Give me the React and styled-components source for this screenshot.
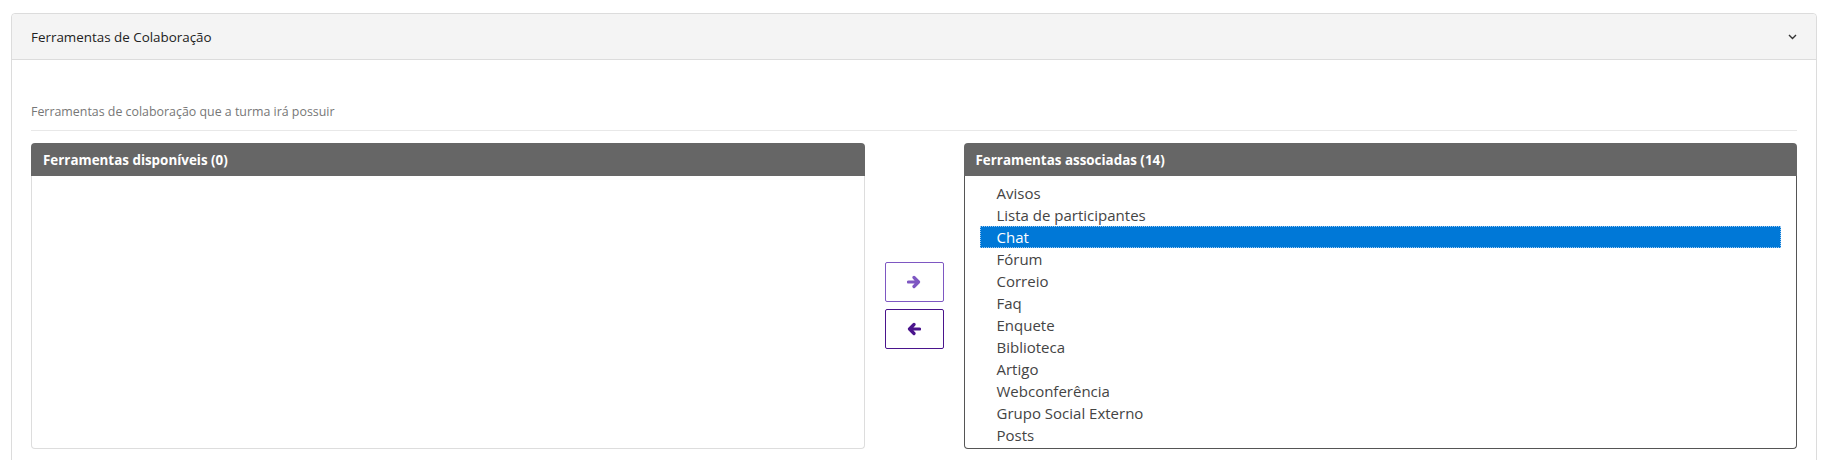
import styled, { createGlobalStyle } from "styled-components";

const GlobalStyle = createGlobalStyle`
  body {
    margin: 0;
    background: #fff;
    font-family: "Open Sans", "Noto Sans", sans-serif;
    color: #333;
  }
`;

const Page = styled.div`
  padding: 13px 7px 0 11px;
`;

const Card = styled.div`
  border: 1px solid #dcdcdc;
  border-radius: 4px;
  background: #fff;
`;

const CardHeader = styled.div`
  display: flex;
  align-items: center;
  justify-content: space-between;
  height: 45px;
  padding: 0 19px 0 19px;
  background: #f4f4f4;
  border-bottom: 1px solid #dcdcdc;
  border-radius: 4px 4px 0 0;
  font-size: 13.4px;
  color: #222;
`;

const CardBody = styled.div`
  padding: 43px 19px 24px 19px;
`;

const Hint = styled.div`
  font-size: 12.4px;
  color: #777;
  padding-bottom: 10px;
  border-bottom: 1px solid #e8e8e8;
  margin-bottom: 12px;
`;

const Columns = styled.div`
  display: grid;
  grid-template-columns: 1fr 99px 1fr;
`;

const Panel = styled.div`
  display: flex;
  flex-direction: column;
  height: 306px;
`;

const PanelTitle = styled.div`
  height: 33px;
  display: flex;
  align-items: center;
  padding: 0 12px;
  background: #666;
  color: #fff;
  font-weight: 700;
  font-size: 13.4px;
  border-radius: 4px 4px 0 0;
`;

const PanelList = styled.div`
  flex: 1;
  border: 1px solid ${(p) => (p.$focused ? "#555" : "#ddd")};
  border-top: none;
  border-radius: 0 0 4px 4px;
  padding: 6px 15px 0 15px;
`;

const Option = styled.div`
  height: 22px;
  line-height: 22px;
  padding-left: 17px;
  font-size: 15px;
  color: ${(p) => (p.$selected ? "#fff" : "#444")};
  background: ${(p) => (p.$selected ? "#0078d7" : "transparent")};
  outline: ${(p) => (p.$selected ? "1px dotted #9cc8f0" : "none")};
  outline-offset: -1px;
`;

const Mover = styled.div`
  display: flex;
  flex-direction: column;
  align-items: center;
  gap: 7px;
  padding-top: 119px;
`;

const MoveButton = styled.button`
  width: 59px;
  height: 40px;
  display: flex;
  align-items: center;
  justify-content: center;
  background: #fff;
  border: 1px solid ${(p) => p.$color};
  border-radius: 2px;
  color: ${(p) => p.$color};
  padding: 0;
`;

// chunky arrow, flipped for the "remove" direction
const Arrow = ({ left }) => (
  <svg
    width="14"
    height="14"
    viewBox="0 0 14 14"
    style={left ? { transform: "scaleX(-1)" } : undefined}
  >
    <path
      d="M1.5 7 H11 M7 2.5 L11.5 7 L7 11.5"
      fill="none"
      stroke="currentColor"
      strokeWidth="3.2"
      strokeLinecap="round"
      strokeLinejoin="round"
    />
  </svg>
);

const Chevron = () => (
  <svg width="9" height="6" viewBox="0 0 9 6">
    <polyline points="1,1 4.5,4.5 8,1" fill="none" stroke="#333" strokeWidth="1.4" />
  </svg>
);

const associadas = [
  "Avisos",
  "Lista de participantes",
  "Chat",
  "Fórum",
  "Correio",
  "Faq",
  "Enquete",
  "Biblioteca",
  "Artigo",
  "Webconferência",
  "Grupo Social Externo",
  "Posts",
];

export default function App() {
  return (
    <>
      <GlobalStyle />
      <Page>
        <Card>
          <CardHeader>
            <span>Ferramentas de Colaboração</span>
            <Chevron />
          </CardHeader>
          <CardBody>
            <Hint>Ferramentas de colaboração que a turma irá possuir</Hint>
            <Columns>
              <Panel>
                <PanelTitle>Ferramentas disponíveis (0)</PanelTitle>
                <PanelList />
              </Panel>
              <Mover>
                <MoveButton $color="#7e57c2">
                  <Arrow />
                </MoveButton>
                <MoveButton $color="#4a148c">
                  <Arrow left />
                </MoveButton>
              </Mover>
              <Panel>
                <PanelTitle>Ferramentas associadas (14)</PanelTitle>
                <PanelList $focused>
                  {associadas.map((item) => (
                    <Option key={item} $selected={item === "Chat"}>
                      {item}
                    </Option>
                  ))}
                </PanelList>
              </Panel>
            </Columns>
          </CardBody>
        </Card>
      </Page>
    </>
  );
}
